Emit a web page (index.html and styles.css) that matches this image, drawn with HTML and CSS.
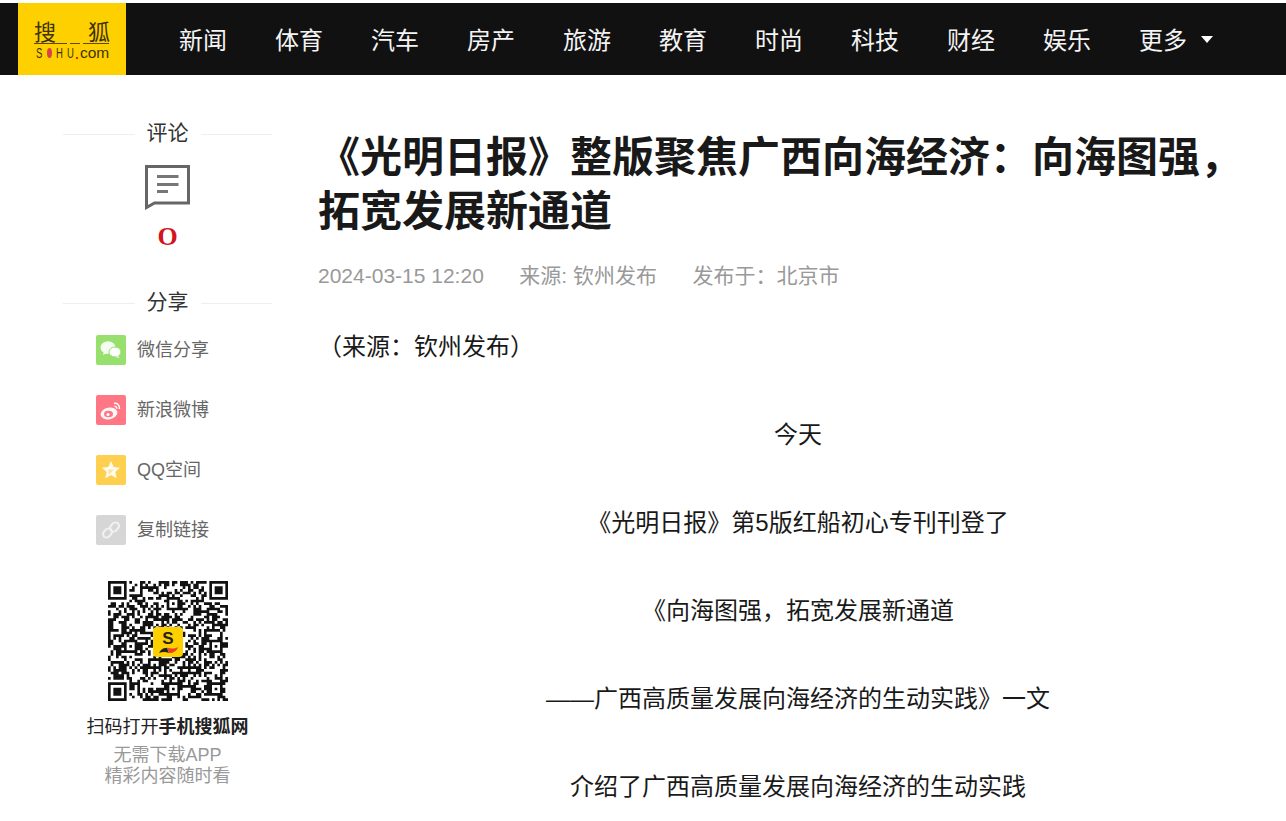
FILE: index.html
```html
<!DOCTYPE html>
<html lang="zh-CN">
<head>
<meta charset="utf-8">
<title>《光明日报》整版聚焦广西向海经济</title>
<link rel="stylesheet" href="styles.css">
</head>
<body>
<header class="topbar">
  <a class="logo">
    <span class="logo-cn"><span>搜</span><span>狐</span></span>
    <span class="logo-rule"><i class="r1"></i><i class="r2"></i><i class="r3"></i></span>
    <span class="logo-en"><span class="ch s">S</span><b class="dot"></b><span class="ch h">H</span><span class="ch u">U</span><b class="reddot"></b><span class="com">com</span></span>
  </a>
  <nav class="nav">
    <a>新闻</a><a>体育</a><a>汽车</a><a>房产</a><a>旅游</a><a>教育</a><a>时尚</a><a>科技</a><a>财经</a><a>娱乐</a>
    <a class="more">更多<i class="caret"></i></a>
  </nav>
</header>
<main class="page">
  <aside class="side">
    <div class="side-title"><span>评论</span></div>
    <svg class="comment-icon" viewBox="0 0 45 45" aria-hidden="true">
      <path d="M1.5 1.500H43.500V38H9.500L1.500 42.500V1.500Z" fill="none" stroke="#666" stroke-width="3"/>
      <rect x="12" y="10" width="21.500" height="3" fill="#777"/>
      <rect x="12" y="18" width="21.500" height="3" fill="#777"/>
      <rect x="12" y="25" width="11" height="3" fill="#777"/>
    </svg>
    <div class="count">O</div>
    <div class="side-title share-title"><span>分享</span></div>
    <ul class="share">
      <li><span class="ico wx"><svg viewBox="0 0 30 30"><ellipse cx="12" cy="12.500" rx="7.500" ry="6.300" fill="#fff" opacity=".9"/><path d="M8 17l-1 3 4-2z" fill="#fff"/><ellipse cx="19" cy="17" rx="6" ry="5" fill="#fff" stroke="#98e06e" stroke-width="1"/><path d="M22 21l1.500 2-3.500-1z" fill="#fff"/></svg></span>微信分享</li>
      <li><span class="ico wb"><svg viewBox="0 0 30 30"><ellipse cx="13" cy="18.500" rx="8.500" ry="5.800" fill="#fff" opacity=".95" transform="rotate(-12 13 18.500)"/><ellipse cx="12.500" cy="19" rx="4.500" ry="3.200" fill="#ff7784"/><circle cx="12" cy="19.500" r="1.500" fill="#fff"/><path d="M18 8.500c3-.8 6 1.500 5.500 5.500" fill="none" stroke="#fff" stroke-width="1.500"/><path d="M18.500 11.500c1.500-.3 2.600.8 2.300 2.300" fill="none" stroke="#fff" stroke-width="1.300"/></svg></span>新浪微博</li>
      <li><span class="ico qq"><svg viewBox="0 0 30 30"><path d="M15 6l2.700 6 6.300.7-4.700 4.200 1.400 6.400L15 20l-5.700 3.300 1.400-6.400L6 12.700l6.300-.7z" fill="#fff" opacity=".92"/><path d="M12 14.500h6l-5 5z" fill="#ffd04f" opacity=".55"/></svg></span>QQ空间</li>
      <li><span class="ico ln"><svg viewBox="0 0 30 30"><g fill="none" stroke="#f1f1f1" stroke-width="2"><rect x="15" y="7" width="7" height="10" rx="3.500" transform="rotate(42 18.500 12)"/><rect x="8" y="13" width="7" height="10" rx="3.500" transform="rotate(42 11.500 18)"/></g></svg></span>复制链接</li>
    </ul>
    <div class="qr" id="qr">
      <svg class="qr-logo" viewBox="0 0 30 30" aria-hidden="true">
        <rect width="30" height="30" rx="4" fill="#ffd000"/>
        <text class="qr-s" x="15" y="17" text-anchor="middle">S</text>
        <path d="M6 26c2-4 4.500-5.500 8-5 1 2 1.500 4 2 5-3-1-6-1.500-10 0z" fill="#222"/>
        <path d="M13.500 20.500c3.500 1 7.500 2 11.500-.5-1 4-5 6-8.500 6-1-2-2-3.500-3-5.500z" fill="#e8402a"/>
      </svg>
    </div>
    <p class="qr-cap">扫码打开<b>手机搜狐网</b></p>
    <p class="qr-note">无需下载APP<br>精彩内容随时看</p>
  </aside>
  <article class="article">
    <h1 class="title">《光明日报》整版聚焦广西向海经济：向海图强，拓宽发展新通道</h1>
    <div class="meta"><span>2024-03-15 12:20</span><span>来源: 钦州发布</span><span>发布于：北京市</span></div>
    <p class="para lead">（来源：钦州发布）</p>
    <p class="para center">今天</p>
    <p class="para center">《光明日报》第5版红船初心专刊刊登了</p>
    <p class="para center">《向海图强，拓宽发展新通道</p>
    <p class="para center">——广西高质量发展向海经济的生动实践》一文</p>
    <p class="para center">介绍了广西高质量发展向海经济的生动实践</p>
  </article>
</main>
<script src="qr.js"></script>
</body>
</html>
```

FILE: styles.css
```css
* { box-sizing: border-box; }
html, body { margin: 0; padding: 0; height: 821px; overflow: hidden; }
body {
  background: #fff;
  color: #191919;
  font-family: "Liberation Sans", "Noto Sans CJK SC", sans-serif;
  padding-top: 3px;
}
.topbar {
  display: flex;
  height: 72px;
  background: #111;
  padding-left: 18px;
}
.logo {
  display: flex;
  flex-direction: column;
  width: 108px;
  height: 72px;
  background: #ffd000;
  padding: 15px 16px 0;
  color: #3d3208;
}
.logo-cn {
  display: flex;
  justify-content: space-between;
  font: 22px/25px "Noto Sans CJK SC", sans-serif;
}
.logo-rule { display: flex; height: 2px; gap: 3px; }
.logo-rule i { display: block; height: 1px; background: #5a4a10; }
.r1 { width: 33px; }
.r2 { width: 10px; }
.r3 { width: 26px; }
.logo-en {
  display: flex;
  align-items: center;
  height: 14px;
  margin-top: 1px;
  padding-left: 1px;
  color: #3d3208;
  font: 14px/14px "Liberation Sans", sans-serif;
  white-space: nowrap;
}
.ch {
  display: block;
  flex: none;
  width: 6px;
  text-align: center;
  transform: scaleX(.68);
}
.s { margin-right: 6px; }
.h { margin-right: 5px; }
.dot { display: block; flex: none; width: 5px; height: 10px; margin-right: 3px; border-radius: 50%; background: #d8434a; }
.reddot { display: block; flex: none; width: 2px; height: 2px; margin: 9px 2px 0 4px; background: #f01818; }
.com { font-size: 15.500px; }
.nav {
  display: flex;
  align-items: center;
  gap: 48px;
  margin-left: 53px;
  margin-top: -1px;
  color: #f4f4f4;
  font: 24px/36px "Noto Sans CJK SC", sans-serif;
}
.more { display: flex; align-items: center; }
.caret {
  width: 0;
  height: 0;
  margin-left: 14px;
  margin-top: 2px;
  border-left: 6px solid transparent;
  border-right: 6px solid transparent;
  border-top: 7px solid #fff;
}
.page {
  display: flex;
  gap: 46px;
  padding-left: 63px;
}
.side {
  display: flex;
  flex-direction: column;
  align-items: center;
  flex: none;
  width: 209px;
  padding-top: 42px;
}
.side-title {
  display: flex;
  align-items: center;
  align-self: stretch;
  gap: 12px;
  height: 28px;
  color: #333;
  font: 21px/28px "Noto Sans CJK SC", sans-serif;
}
.side-title::before, .side-title::after {
  content: "";
  flex: 1;
  height: 1px;
  margin-top: 6px;
  background: #eee;
}
.comment-icon { display: block; width: 45px; height: 45px; margin-top: 20px; }
.count {
  margin-top: 10px;
  height: 34px;
  color: #d3141d;
  font: bold 26px/34px "Liberation Serif", serif;
}
.share-title { margin-top: 32px; }
.share {
  display: flex;
  flex-direction: column;
  gap: 30px;
  align-self: stretch;
  margin: 21px 0 0;
  padding: 0 0 0 33px;
  list-style: none;
  color: #666;
  font-size: 18px;
  line-height: 30px;
}
.share li { display: flex; align-items: center; gap: 11px; }
.ico { display: block; flex: none; width: 30px; height: 30px; border-radius: 2px; }
.ico svg { display: block; width: 30px; height: 30px; }
.wx { background: #98e06e; }
.wb { background: #ff7784; }
.qq { background: #ffd04f; }
.ln { background: #d6d6d6; }
.qr {
  position: relative;
  width: 120px;
  height: 120px;
  margin-top: 36px;
}
.qr-grid { display: block; width: 120px; height: 120px; }
.qr-logo {
  position: absolute;
  left: 45px;
  top: 46px;
  width: 30px;
  height: 30px;
}
.qr-s {
  fill: #222;
  font: 900 17px "Liberation Sans", sans-serif;
}
.qr-cap {
  margin: 14px 0 0;
  color: #222;
  font-size: 18px;
  line-height: 24px;
  white-space: nowrap;
}
.qr-cap b { font-weight: 700; }
.qr-note {
  margin: 6px 0 0;
  color: #999;
  font-size: 18px;
  line-height: 21px;
  text-align: center;
}
.article { flex: none; width: 960px; padding-top: 52px; }
.title {
  margin: 0;
  color: #191919;
  font: 700 42px/54px "Noto Sans CJK SC", sans-serif;
}
.meta {
  display: flex;
  gap: 35.500px;
  margin-top: 26px;
  color: #999;
  font-size: 21px;
  line-height: 30px;
}
.para {
  margin: 0;
  color: #191919;
  font-size: 24px;
  line-height: 40px;
  padding-bottom: 48px;
}
.lead { margin-top: 36px; }
.center { text-align: center; }
```

FILE: qr.js
```js
(function () {
  var n = 45, seed = 20240315, d = "";
  function rnd() { seed = (seed * 1103515245 + 12345) & 0x7fffffff; return (seed >> 12) % 100 / 100; }
  var finders = [[0, 0], [38, 0], [0, 38]];
  var aligns = [[22, 6], [6, 22], [22, 22], [38, 22], [22, 38], [38, 38]];
  function pattern(list, size, i, j) {
    for (var k = 0; k < list.length; k++) {
      var a = i - list[k][0], b = j - list[k][1];
      if (a >= 0 && b >= 0 && a < size && b < size) {
        var m = size - 1;
        if (size === 7) return (a === 0 || b === 0 || a === m || b === m || (a > 1 && a < 5 && b > 1 && b < 5)) ? 1 : 0;
        return (a === 0 || b === 0 || a === m || b === m || (a === 2 && b === 2)) ? 1 : 0;
      }
    }
    return -1;
  }
  for (var j = 0; j < n; j++) {
    for (var i = 0; i < n; i++) {
      var v = rnd() < 0.52 ? 1 : 0;
      if ((i < 8 && j < 8) || (i > 36 && j < 8) || (i < 8 && j > 36)) v = 0;
      var f = pattern(finders, 7, i, j);
      if (f >= 0) v = f;
      var g = pattern(aligns, 5, i, j);
      if (g >= 0) v = g;
      if (v) d += "M" + i + " " + j + "h1v1h-1z";
    }
  }
  var ns = "http://www.w3.org/2000/svg";
  var svg = document.createElementNS(ns, "svg");
  svg.setAttribute("viewBox", "0 0 45 45");
  svg.setAttribute("class", "qr-grid");
  var p = document.createElementNS(ns, "path");
  p.setAttribute("d", d);
  p.setAttribute("fill", "#111");
  svg.appendChild(p);
  var box = document.getElementById("qr");
  box.insertBefore(svg, box.firstChild);
})();
```
